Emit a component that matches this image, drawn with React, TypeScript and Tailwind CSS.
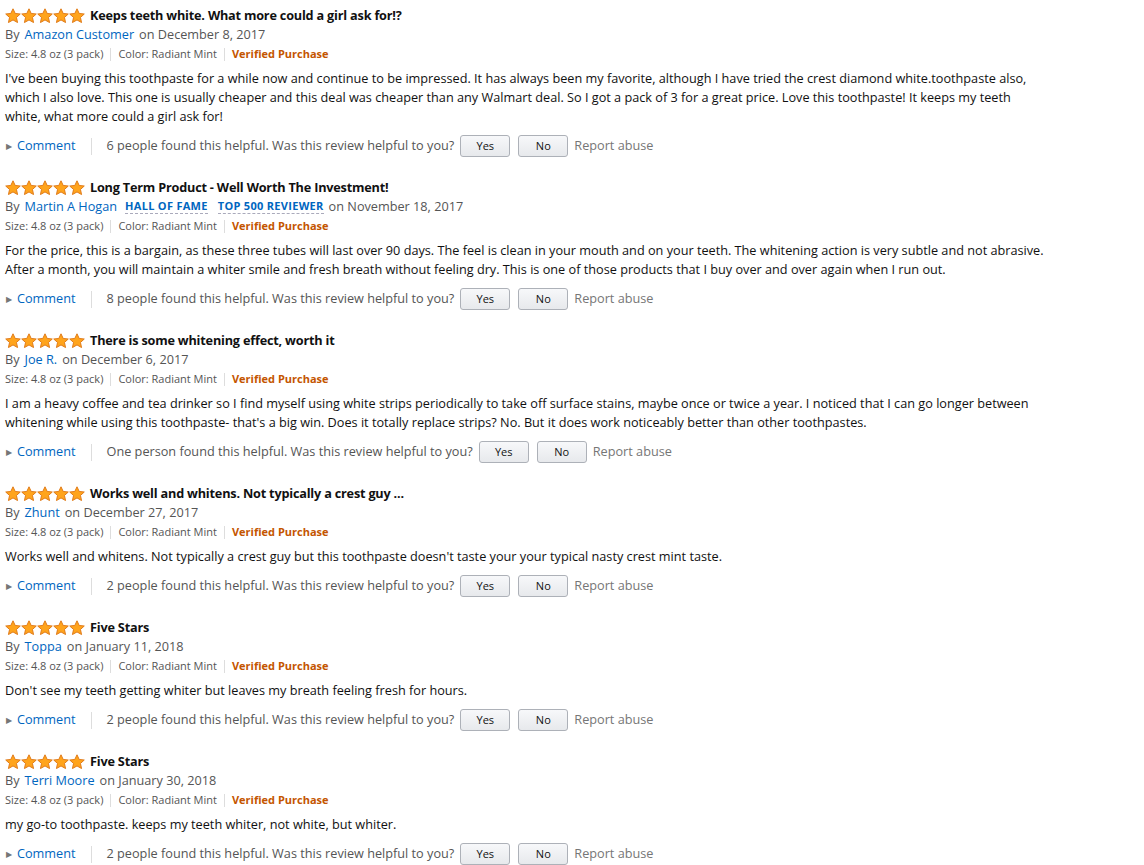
import React from 'react'

type Review = {
  title: string
  author: string
  badges?: string[]
  date: string
  body: string[]
  helpful: string
}

const reviews: Review[] = [
  {
    title: 'Keeps teeth white. What more could a girl ask for!?',
    author: 'Amazon Customer',
    date: 'December 8, 2017',
    body: [
      "I've been buying this toothpaste for a while now and continue to be impressed. It has always been my favorite, although I have tried the crest diamond white.toothpaste also,",
      'which I also love. This one is usually cheaper and this deal was cheaper than any Walmart deal. So I got a pack of 3 for a great price. Love this toothpaste! It keeps my teeth',
      'white, what more could a girl ask for!',
    ],
    helpful: '6 people found this helpful.',
  },
  {
    title: 'Long Term Product - Well Worth The Investment!',
    author: 'Martin A Hogan',
    badges: ['HALL OF FAME', 'TOP 500 REVIEWER'],
    date: 'November 18, 2017',
    body: [
      'For the price, this is a bargain, as these three tubes will last over 90 days. The feel is clean in your mouth and on your teeth. The whitening action is very subtle and not abrasive.',
      'After a month, you will maintain a whiter smile and fresh breath without feeling dry. This is one of those products that I buy over and over again when I run out.',
    ],
    helpful: '8 people found this helpful.',
  },
  {
    title: 'There is some whitening effect, worth it',
    author: 'Joe R.',
    date: 'December 6, 2017',
    body: [
      'I am a heavy coffee and tea drinker so I find myself using white strips periodically to take off surface stains, maybe once or twice a year. I noticed that I can go longer between',
      "whitening while using this toothpaste- that's a big win. Does it totally replace strips? No. But it does work noticeably better than other toothpastes.",
    ],
    helpful: 'One person found this helpful.',
  },
  {
    title: 'Works well and whitens. Not typically a crest guy ...',
    author: 'Zhunt',
    date: 'December 27, 2017',
    body: ["Works well and whitens. Not typically a crest guy but this toothpaste doesn't taste your your typical nasty crest mint taste."],
    helpful: '2 people found this helpful.',
  },
  {
    title: 'Five Stars',
    author: 'Toppa',
    date: 'January 11, 2018',
    body: ["Don't see my teeth getting whiter but leaves my breath feeling fresh for hours."],
    helpful: '2 people found this helpful.',
  },
  {
    title: 'Five Stars',
    author: 'Terri Moore',
    date: 'January 30, 2018',
    body: ['my go-to toothpaste. keeps my teeth whiter, not white, but whiter.'],
    helpful: '2 people found this helpful.',
  },
]

function Star() {
  return (
    <svg width="16" height="16" viewBox="0 0 24 24" className="shrink-0">
      <path
        d="M12 1.2l3.3 7 7.6.8-5.7 5.2 1.6 7.6L12 17.9l-6.8 3.9 1.6-7.6L1.1 9l7.6-.8z"
        fill="#ffa41c"
        stroke="#e07b1a"
        strokeWidth="1.5"
        strokeLinejoin="round"
      />
    </svg>
  )
}

function ReviewBlock({ r }: { r: Review }) {
  return (
    <div className="mb-[21px]">
      {/* title */}
      <div className="flex items-center h-[19px]">
        <div className="flex w-[80px] mr-[5px]">
          {[0, 1, 2, 3, 4].map(i => <Star key={i} />)}
        </div>
        <span className="font-bold text-[#111] tracking-[-0.2px]">{r.title}</span>
      </div>

      {/* author */}
      <div className="flex items-center h-[19px]">
        <span className="text-[#555]">By</span>
        <a className="text-[#0066c0] ml-[5px]">{r.author}</a>
        {r.badges?.map((b, i) => (
          <span
            key={b}
            className={`${i === 0 ? 'ml-[8px]' : 'ml-[10px]'} text-[11px] font-bold tracking-[0.3px] text-[#0066c0] border-b border-dashed border-[#aab] leading-[14px]`}
          >
            {b}
          </span>
        ))}
        <span className="text-[#555] ml-[5px]">on {r.date}</span>
      </div>

      {/* meta */}
      <div className="flex items-center h-[21px] text-[11px] text-[#555]">
        <span>Size: 4.8 oz (3 pack)</span>
        <span className="mx-[7px] w-px h-[13px] bg-[#ddd]" />
        <span>Color: Radiant Mint</span>
        <span className="mx-[7px] w-px h-[13px] bg-[#ddd]" />
        <span className="font-bold text-[#c45500]">Verified Purchase</span>
      </div>

      {/* body */}
      <div className="mt-[4px] text-[#111] leading-[19px]">
        {r.body.map((l, i) => <div key={i} className="whitespace-nowrap">{l}</div>)}
      </div>

      {/* actions */}
      <div className="flex items-center h-[22px] mt-[9px]">
        <span className="text-[#767676] text-[8px] ml-[1px] mr-[5px]">&#9654;</span>
        <a className="text-[#0066c0]">Comment</a>
        <span className="ml-[15px] mr-[15px] w-px h-[17px] bg-[#ddd]" />
        <span className="text-[#555]">{r.helpful} Was this review helpful to you?</span>
        <button className="ml-[6px] w-[50px] h-[22px] rounded-[3px] border border-[#adb1b8] bg-gradient-to-b from-[#f7f8fa] to-[#e7e9ec] text-[11px] text-[#111]">Yes</button>
        <button className="ml-[8px] w-[50px] h-[22px] rounded-[3px] border border-[#adb1b8] bg-gradient-to-b from-[#f7f8fa] to-[#e7e9ec] text-[11px] text-[#111]">No</button>
        <span className="ml-[6px] text-[#767676]">Report abuse</span>
      </div>
    </div>
  )
}

export default function App() {
  return (
    <div className="w-[1144px] h-[865px] overflow-hidden bg-white pl-[5px] pt-[6px] text-[12.7px] font-['Open_Sans',sans-serif]">
      {reviews.map((r, i) => <ReviewBlock key={i} r={r} />)}
    </div>
  )
}
